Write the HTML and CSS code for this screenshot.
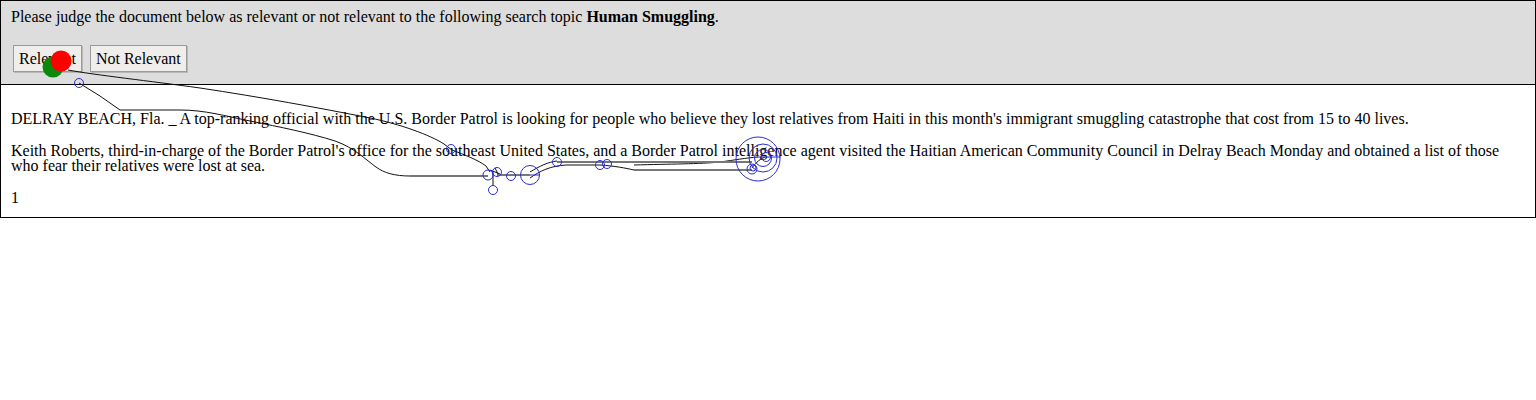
FILE: index.html
```html
<!DOCTYPE html>
<html>
<head>
<meta charset="utf-8">
<link rel="stylesheet" href="styles.css">
</head>
<body>
<div class="frame">
  <div class="judge">
    <p class="prompt">Please judge the document below as relevant or not relevant to the following search topic <b>Human Smuggling</b>.</p>
    <div class="actions">
      <button class="btn">Relevant</button>
      <button class="btn">Not Relevant</button>
    </div>
  </div>
  <div class="doc">
    <p>DELRAY BEACH, Fla. _ A top-ranking official with the U.S. Border Patrol is looking for people who believe they lost relatives from Haiti in this month's immigrant smuggling catastrophe that cost from 15 to 40 lives.</p>
    <p>Keith Roberts, third-in-charge of the Border Patrol's office for the southeast United States, and a Border Patrol intelligence agent visited the Haitian American Community Council in Delray Beach Monday and obtained a list of those who fear their relatives were lost at sea.</p>
    <p>1</p>
  </div>
</div>
<svg class="trace" width="1536" height="400" viewBox="0 0 1536 400">
  <g fill="none" stroke="#111" stroke-width="1">
    <path d="M68,70 C95,75 150,81 200,88 C260,97 320,108 370,118 C400,124 430,135 444,144 L452,150 C465,155 478,160 486,166 L490,172"/>
    <path d="M79,83 L100,96 L120,110 L180,110 C205,110 225,116 250,121 C280,127 310,133 335,141 C355,148 366,160 376,167 C384,173 395,176 410,176"/>
    <path d="M493,172 L493,186"/>
    <path d="M490,170 L500,174 M495,168 L499,176"/>
    <path d="M530,172 C540,166 548,162 557,161"/>
    <path d="M530,178 C540,171 550,166 566,165 L600,165"/>
    <path d="M600,165 C615,166 625,168 634,170"/>
    <path d="M634,165 C670,164 700,164 720,162 C735,160 745,158 758,157"/>
    <path d="M752,168 C755,164 758,160 765,157"/>
  </g>
  <g fill="none" stroke="#777" stroke-width="2">
    <path d="M410,176 L488,176"/>
    <path d="M497,175 L530,175"/>
    <path d="M557,162 L600,162 L640,162 L752,162"/>
    <path d="M634,170 L752,170"/>
  </g>
  <g fill="none" stroke="#2b2bd0" stroke-width="1">
    <circle cx="79" cy="83" r="4.5"/>
    <circle cx="451" cy="149" r="4.5"/>
    <circle cx="488" cy="175" r="5"/>
    <circle cx="497" cy="172" r="4.5"/>
    <circle cx="493" cy="190" r="4.5"/>
    <circle cx="511" cy="176" r="4.5"/>
    <circle cx="530" cy="175" r="9.5"/>
    <circle cx="557" cy="162" r="4.5"/>
    <circle cx="600" cy="165" r="4.5"/>
    <circle cx="607" cy="164" r="4.5"/>
    <circle cx="758" cy="159" r="22"/>
    <circle cx="763" cy="158" r="14"/>
    <circle cx="763" cy="158" r="8.5"/>
    <circle cx="766" cy="157" r="4.5"/>
    <circle cx="752" cy="169" r="5"/>
    <circle cx="753" cy="168" r="3"/>
    <path d="M757,157 L781,157"/>
    <path d="M530,175 L540,175"/>
  </g>
  <circle cx="53" cy="67" r="10.5" fill="#0a8a0a"/>
  <circle cx="61" cy="61" r="10.5" fill="#ff0000"/>
</svg>
</body>
</html>
```

FILE: styles.css
```css
html, body {
  margin: 0;
  padding: 0;
  background: #fff;
}

body {
  position: relative;
  font-family: "Liberation Serif", "Times New Roman", serif;
  font-size: 16px;
  color: #000;
}

.frame {
  border: 1px solid #000;
}

.judge {
  background: #dddddd;
  border-bottom: 1px solid #000;
  padding: 7px 10px 12px;
}

.prompt {
  margin: 0 0 19px;
  line-height: 18px;
}

.actions {
  display: flex;
  gap: 8px;
  padding-left: 2px;
}

.btn {
  font-family: "Liberation Serif", "Times New Roman", serif;
  font-size: 16px;
  color: #000;
  height: 27px;
  padding: 0 5px;
  margin: 0;
  background: #f0eeeb;
  border: 1px solid #9a9a9a;
  border-radius: 0;
  box-shadow: 1px 1px 0 #b8b8b8;
  line-height: 18px;
}

.doc {
  display: flex;
  flex-direction: column;
  gap: 17px;
  padding: 26px 10px 12px;
}

.doc p {
  margin: 0;
  line-height: 15px;
}

.trace {
  position: absolute;
  top: 0;
  left: 0;
  pointer-events: none;
}
```
